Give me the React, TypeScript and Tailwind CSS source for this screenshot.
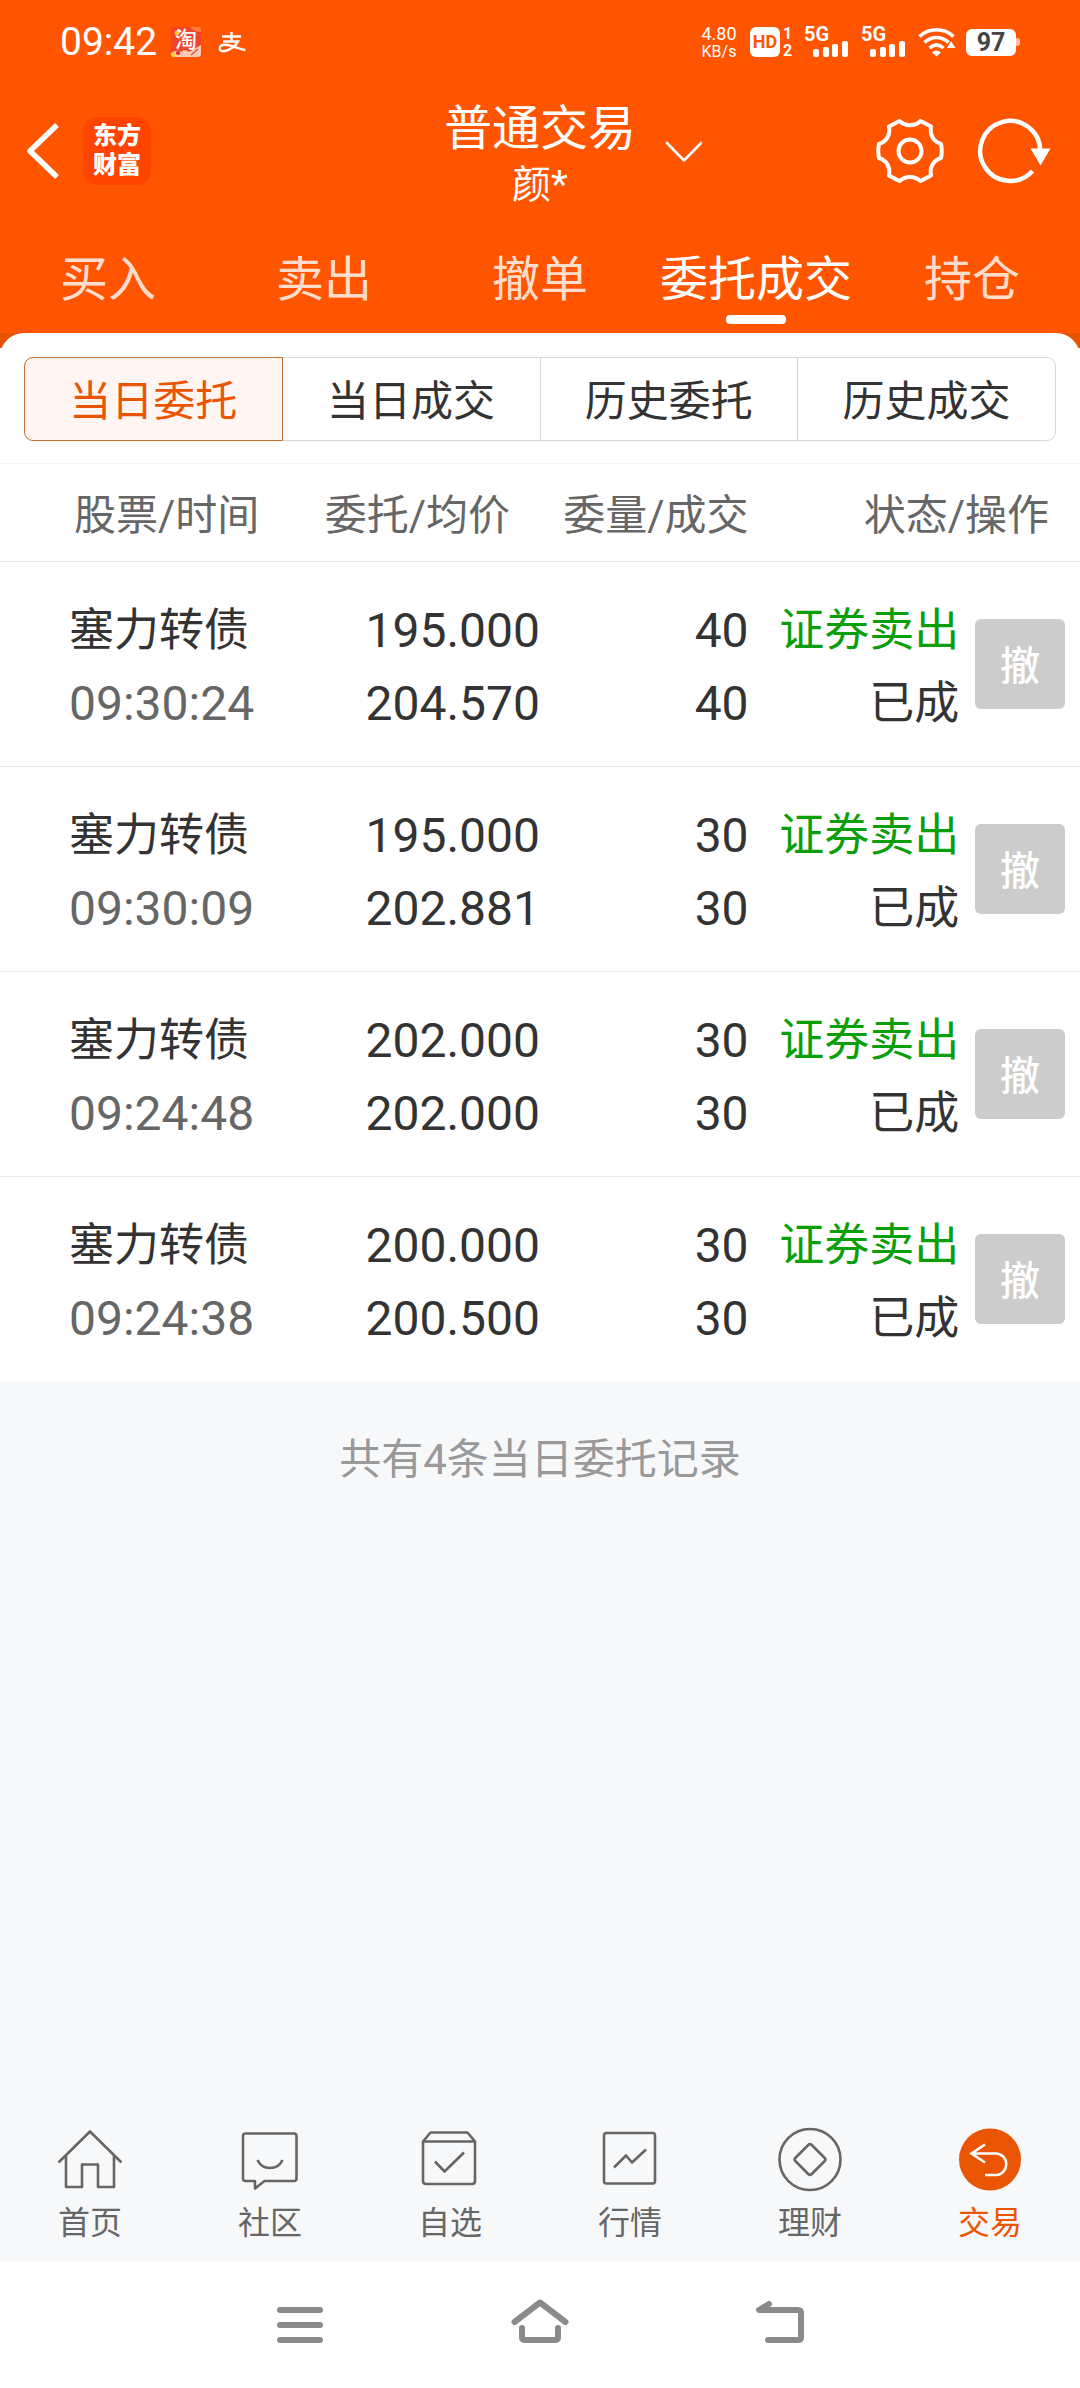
import type { ReactNode } from "react";

const tabs = ["买入", "卖出", "撤单", "委托成交", "持仓"];
const segments = ["当日委托", "当日成交", "历史委托", "历史成交"];

type Order = { name: string; time: string; price: string; average: string; amount: string; filled: string };

const orders: Order[] = [
  { name: "塞力转债", time: "09:30:24", price: "195.000", average: "204.570", amount: "40", filled: "40" },
  { name: "塞力转债", time: "09:30:09", price: "195.000", average: "202.881", amount: "30", filled: "30" },
  { name: "塞力转债", time: "09:24:48", price: "202.000", average: "202.000", amount: "30", filled: "30" },
  { name: "塞力转债", time: "09:24:38", price: "200.000", average: "200.500", amount: "30", filled: "30" },
];

function Signal() {
  return (
    <div className="flex h-[30px] w-[45px] flex-col">
      <span className="h-[14px] text-[20px] leading-[14px] font-bold">5G</span>
      <svg viewBox="0 0 45 16" className="h-4 w-[45px]" fill="currentColor" aria-hidden="true">
        <rect x="9" y="8" width="6" height="8" rx="2" />
        <rect x="19" y="6" width="6" height="10" rx="2" />
        <rect x="28" y="3" width="6" height="13" rx="2" />
        <rect x="38" y="0" width="6" height="16" rx="2" />
      </svg>
    </div>
  );
}

function StatusBar() {
  return (
    <div className="flex h-[84px] items-center justify-between pr-[60px] pl-[60px]">
      <div className="flex items-center">
        <span className="text-[39px] leading-[40px]">09:42</span>
        <span className="relative ml-[14px] flex h-[30px] w-[30px] items-start justify-center overflow-hidden rounded-[3px] bg-[#f0432c] text-[22px] leading-[25px] font-medium">
          <svg viewBox="0 0 30 30" className="absolute inset-0 h-[30px] w-[30px]" aria-hidden="true">
            <path d="M19 0H30V5Q23 5 19 0Z" fill="#ff7a3c" />
            <circle cx="6" cy="6" r="2.500" fill="#ffc83c" />
            <path d="M0 30V26Q5 22 10 25Q14 21 18 25L30 18V30Z" fill="#f9c9b4" />
            <circle cx="3" cy="28" r="2.500" fill="#ffd53c" />
            <circle cx="7" cy="26" r="2" fill="#e8203c" />
            <path d="M20 28L27 22" stroke="#d8553c" strokeWidth="1.500" />
          </svg>
          <span className="relative">淘</span>
        </span>
        <svg viewBox="0 0 28 21" className="ml-[17px] h-[21px] w-7" fill="none" stroke="#fff" strokeWidth="2.400" aria-hidden="true">
          <path d="M4 4.500H23M13.500 0V9.500M5 9.500H20C18 14 11 19.300 5 19.300C.5 19.300 .5 13 6.500 12.800C13 12.500 20 17 27.500 18" />
        </svg>
      </div>
      <div className="flex items-center">
        <div className="flex w-10 flex-col items-center">
          <span className="text-[18px] leading-[18px]">4.80</span>
          <span className="text-[16px] leading-[17px]">KB/s</span>
        </div>
        <span className="ml-[11px] flex h-[30px] w-[30px] items-center justify-center rounded-[6px] bg-white text-[18px] leading-[30px] font-bold text-[#ff5500]">
          HD
        </span>
        <div className="ml-[2px] flex h-[30px] w-[11px] flex-col items-center justify-between text-[16px] leading-[13px] font-bold">
          <span>1</span>
          <span>2</span>
        </div>
        <div className="ml-[11px] flex gap-3">
          <Signal />
          <Signal />
        </div>
        <svg viewBox="0 0 38 30" className="ml-[12px] h-[30px] w-[38px]" fill="none" stroke="#fff" strokeWidth="3.600" aria-hidden="true">
          <path d="M1.500 9.500C11 .5 26 .5 35.500 9.500M6.500 15.500C13.500 8.800 23.500 8.800 30.500 15.500M11.500 21C16 17 21 17 25.500 21" />
          <path d="M18.500 29.500L14 25.500Q18.500 21.500 23 25.500ZM33 14L37.500 21H29Z" fill="#fff" stroke="none" />
        </svg>
        <div className="ml-[10px] flex h-[27px] w-[50px] items-center justify-center rounded-[6px] bg-white text-[25px] leading-[27px] font-bold text-[#444]">
          97
        </div>
        <div className="h-2 w-1 rounded-r-[3px] bg-[#ffc0a0]" />
      </div>
    </div>
  );
}

function TitleBar() {
  return (
    <div className="flex h-[134px] items-center">
      <div className="flex flex-1 items-center">
        <button type="button" aria-label="返回" className="ml-6 flex">
          <svg viewBox="0 0 36 56" className="h-14 w-9" fill="none" stroke="#fff" strokeWidth="5.500" strokeLinejoin="round" aria-hidden="true">
            <path d="M33 2L6 28L33 54" />
          </svg>
        </button>
        <div className="ml-[23px] flex h-[68px] w-[68px] flex-col items-center justify-center rounded-[14px] bg-[#ff4400] text-[24px] leading-[29px] font-black">
          <span>东方</span>
          <span>财富</span>
        </div>
      </div>
      <button type="button" className="relative flex flex-col items-center pt-3">
        <span className="text-[48px] leading-[56px]">普通交易</span>
        <span className="text-[39px] leading-[56px]">颜*</span>
        <svg viewBox="0 0 38 22" className="absolute top-[52px] left-full ml-[29px] h-[22px] w-[38px]" fill="none" stroke="#fff" strokeWidth="2.600" strokeLinecap="round" strokeLinejoin="round" aria-hidden="true">
          <path d="M2 2L19 19.500L36 2" />
        </svg>
      </button>
      <div className="flex flex-1 items-center justify-end">
        <button type="button" aria-label="设置" className="flex">
          <svg viewBox="0 0 68 68" className="h-[68px] w-[68px]" fill="none" stroke="#fff" strokeWidth="4" strokeLinejoin="round" aria-hidden="true">
            <path d="M23.500 4C29 9.500 39 9.500 44.500 4L55 9.500C53.500 17.500 57 24.500 65 27Q66.500 34 65 41C57 43.500 53.500 50.500 55 58.500L44.500 64C39 58.500 29 58.500 23.500 64L13 58.500C14.500 50.500 11 43.500 3 41Q1.500 34 3 27C11 24.500 14.500 17.500 13 9.500Z" />
            <circle cx="34" cy="34" r="11.500" />
          </svg>
        </button>
        <button type="button" aria-label="刷新" className="mr-[29px] ml-[33px] flex">
          <svg viewBox="0 0 74 68" className="h-[68px] w-[74px]" fill="none" stroke="#fff" strokeWidth="4.500" aria-hidden="true">
            <path d="M55.500 54A30 30 0 1 1 63.200 34" />
            <path d="M53.500 31.500H73.500L63.500 48.500Z" fill="#fff" stroke="none" />
          </svg>
        </button>
      </div>
    </div>
  );
}

function NavIcon({ children }: { children: ReactNode }) {
  return (
    <svg viewBox="0 0 66 66" className="h-[66px] w-[66px]" fill="none" stroke="#666" strokeWidth="2.600" strokeLinejoin="round" aria-hidden="true">
      {children}
    </svg>
  );
}

const navItems = [
  { label: "首页", icon: <path d="M1.500 35.500L33 4.500L64.500 35.500M9 28.500V60H25V37.500H41V60H57V28.500" /> },
  {
    label: "社区",
    icon: <path d="M8.500 6.500H57Q59.500 6.500 59.500 9V51.500Q59.500 54 57 54H27.500L18 61.500V54H8.500Q6 54 6 51.500V9Q6 6.500 8.500 6.500ZM20.500 33Q24 41 33 41T45.500 33" />,
  },
  {
    label: "自选",
    icon: <path d="M6 14.500L13.500 5.500H50.500L58 14.500V54Q58 57 55 57H9Q6 57 6 54ZM6 14.500H58M18 34.500L27.500 44.500L47 25.500" />,
  },
  {
    label: "行情",
    icon: (
      <>
        <rect x="7" y="6" width="51" height="50.500" rx="2.500" />
        <path d="M17 40.500L29 28.500L35 35.500L49 22.500" />
      </>
    ),
  },
  {
    label: "理财",
    icon: (
      <>
        <circle cx="33" cy="32.500" r="30.500" />
        <rect x="21.500" y="21" width="23" height="23" rx="2.500" transform="rotate(45 33 32.500)" />
      </>
    ),
  },
  {
    label: "交易",
    icon: (
      <>
        <circle cx="33" cy="32.500" r="31" fill="#ea5504" stroke="none" />
        <path d="M28 17.500L14.500 26.500L28 35.500M14.500 26.500H39.500A10.800 10.800 0 0 1 39.500 48H28" stroke="#fff" strokeLinejoin="miter" />
      </>
    ),
  },
];

export default function App() {
  return (
    <div className="flex min-h-screen flex-col bg-white font-['Roboto','Noto_Sans_CJK_SC',sans-serif] text-[#333]">
      <header className="bg-[#ff5500] text-white">
        <StatusBar />
        <TitleBar />
        <nav className="flex h-[115px]">
          {tabs.map((tab) => (
            <button
              key={tab}
              type="button"
              className={
                tab === "委托成交"
                  ? "flex flex-1 flex-col items-center pt-[27px] text-[48px] leading-[70px] text-white"
                  : "flex flex-1 flex-col items-center pt-[27px] text-[48px] leading-[70px] text-[#ffddcc]"
              }
            >
              {tab}
              {tab === "委托成交" && <span className="h-[9px] w-[60px] rounded-[4px] bg-white" />}
            </button>
          ))}
        </nav>
      </header>

      <main className="flex flex-1 flex-col bg-[#f7f8fa]">
        <div className="bg-[linear-gradient(#e65300_15px,#fff_15px)]">
          <div className="rounded-t-[24px] bg-white">
            <div className="flex px-6 pt-6 pb-[22px]">
              {segments.map((segment, i) => (
                <button
                  key={segment}
                  type="button"
                  className={
                    i === 0
                      ? "h-[84px] flex-1 rounded-l-[9px] border border-[#c07030] bg-[#fff6f3] pt-[6px] text-[42px] leading-[60px] text-[#ea5504]"
                      : "h-[84px] flex-1 border border-l-0 border-[#d8d8d8] pt-[6px] text-[42px] leading-[60px] last:rounded-r-[9px]"
                  }
                >
                  {segment}
                </button>
              ))}
            </div>
            <table className="w-full table-fixed border-collapse">
              <colgroup>
                <col className="w-[25%]" />
                <col className="w-[25%]" />
                <col className="w-[19.5%]" />
                <col className="w-[19.5%]" />
                <col className="w-[11%]" />
              </colgroup>
              <thead>
                <tr className="h-[98px] border-t border-b border-t-[#f5f5f5] border-b-[#eaeaea] text-[42px] leading-[60px] text-[#666]">
                  <th className="pt-[6px] pl-[74px] text-left font-normal whitespace-nowrap">股票/时间</th>
                  <th className="pt-[6px] pr-[30px] text-right font-normal whitespace-nowrap">委托/均价</th>
                  <th className="pt-[6px] pr-[2px] text-right font-normal whitespace-nowrap">委量/成交</th>
                  <th colSpan={2} className="pt-[6px] pr-[31px] text-right font-normal whitespace-nowrap">
                    状态/操作
                  </th>
                </tr>
              </thead>
              <tbody>
                {orders.map((order) => (
                  <tr key={order.time} className="h-[205px] border-b border-[#eaeaea] text-[48px] leading-[73px] last:border-b-0">
                    <td className="pt-[6px] pl-[69px]">
                      <div className="text-[45px]">{order.name}</div>
                      <div className="text-[#666]">{order.time}</div>
                    </td>
                    <td className="pt-[6px] text-right">
                      <div>{order.price}</div>
                      <div>{order.average}</div>
                    </td>
                    <td className="pt-[6px] pr-[2px] text-right">
                      <div>{order.amount}</div>
                      <div>{order.filled}</div>
                    </td>
                    <td className="pt-[6px] pr-[2px] text-right text-[45px]">
                      <div className="text-[#0a9f0a]">证券卖出</div>
                      <div>已成</div>
                    </td>
                    <td>
                      <button type="button" className="mr-[15px] ml-auto block h-[90px] w-[90px] rounded-[6px] bg-[#ccc] pt-[6px] text-[40px] leading-[60px] font-medium text-white">
                        撤
                      </button>
                    </td>
                  </tr>
                ))}
              </tbody>
            </table>
          </div>
        </div>
        <p className="pt-12 text-center text-[42px] leading-[60px] text-[#999]">共有4条当日委托记录</p>
      </main>

      <nav className="flex h-[147px] bg-[#f7f8fa] pt-3">
        {navItems.map(({ label, icon }) => (
          <a
            key={label}
            href="#"
            className={
              label === "交易"
                ? "flex flex-1 flex-col items-center text-[32px] leading-[60px] text-[#ea5504]"
                : "flex flex-1 flex-col items-center text-[32px] leading-[60px] text-[#666]"
            }
          >
            <NavIcon>{icon}</NavIcon>
            {label}
          </a>
        ))}
      </nav>

      <div className="flex h-[126px] items-center justify-center gap-[180px] bg-white">
        <button type="button" aria-label="菜单" className="flex">
          <svg viewBox="0 0 60 60" className="h-[60px] w-[60px]" fill="none" stroke="#8a8a8a" strokeWidth="6" strokeLinecap="round" aria-hidden="true">
            <path d="M10 15H50M10 30H50M10 45H50" />
          </svg>
        </button>
        <button type="button" aria-label="主屏幕" className="flex">
          <svg viewBox="0 0 60 60" className="h-[60px] w-[60px]" fill="none" stroke="#8a8a8a" strokeWidth="6" strokeLinecap="round" strokeLinejoin="round" aria-hidden="true">
            <path d="M4.500 27L30 7.500L55.500 27M12 33V42Q12 45 15 45H45Q48 45 48 42V33" />
          </svg>
        </button>
        <button type="button" aria-label="返回上一页" className="flex">
          <svg viewBox="0 0 60 60" className="h-[60px] w-[60px]" fill="none" stroke="#8a8a8a" strokeWidth="6" strokeLinecap="round" strokeLinejoin="round" aria-hidden="true">
            <path d="M19 9L9 15H48Q51 15 51 18V42Q51 45 48 45H18" />
          </svg>
        </button>
      </div>
    </div>
  );
}
